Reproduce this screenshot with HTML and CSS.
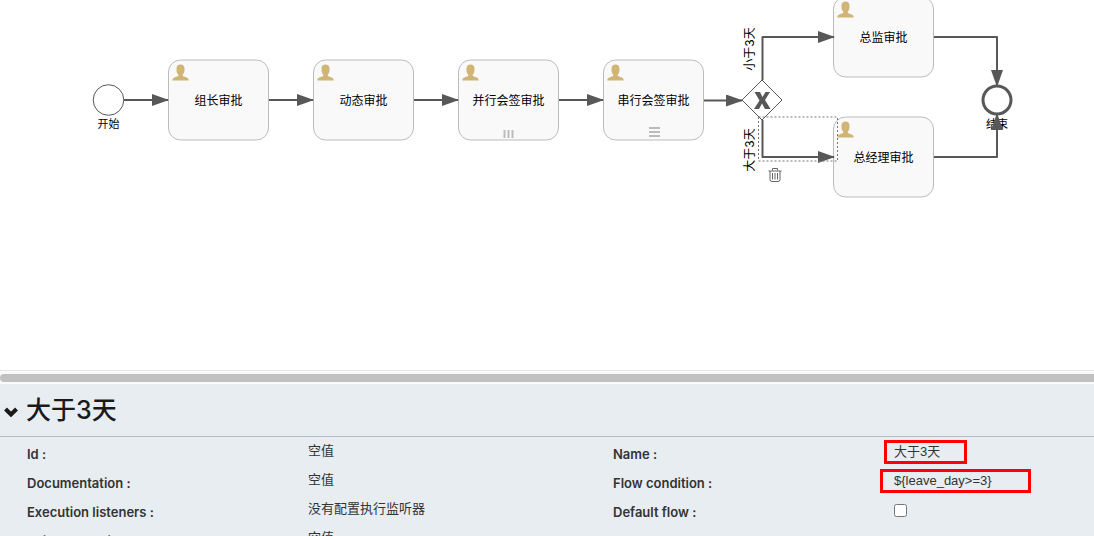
FILE: index.html
```html
<!DOCTYPE html>
<html lang="zh">
<head>
<meta charset="utf-8">
<title>大于3天</title>
<link rel="stylesheet" href="styles.css">
</head>
<body>
<main class="editor">
  <section class="canvas" aria-label="流程图">
    <svg class="diagram" width="100%" height="370">
      <defs>
        <marker id="arrow" markerUnits="userSpaceOnUse" markerWidth="17" markerHeight="12" refX="16" refY="6" orient="auto">
          <path class="arrow-head" d="M0 0L17 6L0 12Z"/>
        </marker>
        <symbol id="user" viewBox="0 0 17 17" width="17" height="17">
          <path class="user-shape" d="M8.500 .5C6.100 .5 4.500 2 4.500 4.300V6.200C4.500 8 5.200 9.400 6.200 10.500V12C5.300 12.900 1.800 13.100 .8 14.600Q.4 15.300 .3 16.500H16.700Q16.600 15.300 16.200 14.600C15.200 13.100 11.700 12.900 10.800 12V10.500C11.800 9.400 12.500 8 12.500 6.200V4.300C12.500 2 10.900 .5 8.500 .5Z"/>
        </symbol>
      </defs>

      <g class="task"><rect x="168.500" y="60" width="100" height="80" rx="12"/><use href="#user" x="172" y="64"/><text x="218.500" y="105">组长审批</text></g>
      <g class="task"><rect x="313.500" y="60" width="100" height="80" rx="12"/><use href="#user" x="317" y="64"/><text x="363.500" y="105">动态审批</text></g>
      <g class="task"><rect x="458.500" y="60" width="100" height="80" rx="12"/><use href="#user" x="462" y="64"/><text x="508.500" y="105">并行会签审批</text>
        <path class="multi" d="M504.500 130V138M508.500 130V138M512.500 130V138"/></g>
      <g class="task"><rect x="603.500" y="60" width="100" height="80" rx="12"/><use href="#user" x="607" y="64"/><text x="653.500" y="105">串行会签审批</text>
        <path class="multi" d="M649 128H660M649 132H660M649 136H660"/></g>
      <g class="task"><rect x="833.500" y="-3" width="100" height="80" rx="12"/><use href="#user" x="837" y="1"/><text x="883.500" y="42">总监审批</text></g>
      <g class="task"><rect x="833.500" y="117" width="100" height="80" rx="12"/><use href="#user" x="837" y="121"/><text x="883.500" y="162">总经理审批</text></g>

      <circle class="start" cx="108.500" cy="100" r="15.300"/>
      <text class="caption" x="108.500" y="128">开始</text>
      <path class="gateway" d="M742 100L762 80L782 100L762 120Z"/>
      <path class="cross" d="M754.500 92H760L762.500 97L765.500 92H770L765 100L770.500 109H765L762 103.500L759 109H754L759.500 100.500Z"/>
      <circle class="end" cx="997" cy="100" r="14"/>
      <text class="caption" x="997" y="128">结束</text>

      <g class="flow">
        <path d="M124 100H168"/>
        <path d="M269 100H313"/>
        <path d="M414 100H458"/>
        <path d="M559 100H603"/>
        <path d="M704 100.500H742"/>
        <path d="M762.500 80V37H834"/>
        <path d="M762.500 120V157H834"/>
        <path d="M934 37H997V86"/>
        <path d="M934 157H997V114"/>
      </g>
      <text class="caption flow-name" transform="translate(754 49) rotate(-90)">小于3天</text>
      <text class="caption flow-name" transform="translate(754 150) rotate(-90)">大于3天</text>
      <rect class="selection" x="758.500" y="117" width="79" height="44"/>
      <g class="trash">
        <path d="M768.500 171H781.500M772.500 170.500V168.500H777.500V170.500M770 171V179.500Q770 181.500 772 181.500H778Q780 181.500 780 179.500V171M772.500 173V179.500M775 173V179.500M777.500 173V179.500"/>
      </g>
    </svg>
  </section>

  <div class="splitter" role="separator"><div class="splitter-bar"></div></div>

  <section class="properties">
    <h1 class="title">
      <svg class="chevron" width="14" height="10" viewBox="0 0 14 10"><path d="M1.500 2L7 7.500L12.500 2"/></svg>
      <span>大于3天</span>
    </h1>
    <dl class="fields">
      <dt>Id :</dt><dd>空值</dd>
      <dt>Name :</dt><dd><span class="mark mark-name">大于3天</span></dd>
      <dt>Documentation :</dt><dd>空值</dd>
      <dt>Flow condition :</dt><dd><span class="mark mark-condition">${leave_day&gt;=3}</span></dd>
      <dt>Execution listeners :</dt><dd>没有配置执行监听器</dd>
      <dt><label for="default-flow">Default flow :</label></dt><dd><input class="check" type="checkbox" id="default-flow"></dd>
      <dt>Skip expression :</dt><dd>空值</dd>
    </dl>
  </section>
</main>
</body>
</html>
```
FILE: styles.css
```css
* { box-sizing: border-box; }

body {
  margin: 0;
  background: #fff;
  color: #333;
  font-family: Inter, "Noto Sans CJK SC", sans-serif;
}

.editor {
  display: flex;
  flex-direction: column;
  height: 100vh;
  overflow: hidden;
}

.canvas { flex: none; }
.diagram { display: block; }

.task rect { fill: #f9f9f9; stroke: #bbb; }
.task text,
.caption {
  font-family: Inter, "Noto Sans CJK SC", sans-serif;
  fill: #000;
  text-anchor: middle;
}
.task text { font-size: 12px; }
.caption { font-size: 11px; }
.flow-name { font-size: 12px; }
.user-shape { fill: #d1b575; }
.multi { stroke: #bbb; stroke-width: 2; }
.start { fill: #fff; stroke: #585858; }
.end { fill: #fff; stroke: #585858; stroke-width: 3; }
.gateway { fill: #fff; stroke: #585858; }
.cross { fill: #585858; }
.arrow-head { fill: #585858; }
.flow path {
  fill: none;
  stroke: #585858;
  stroke-width: 2;
  stroke-linejoin: round;
  marker-end: url(#arrow);
}
.selection { fill: none; stroke: #777; stroke-dasharray: 2 2; }
.trash path { fill: none; stroke: #666; }

.splitter {
  flex: none;
  padding: 3px 0 2px;
  border-top: 1px solid #e6e6e6;
  background: #fafafa;
}
.splitter-bar {
  height: 8px;
  border-radius: 4px 0 0 4px;
  background: #c1c1c1;
}

.properties {
  flex: 1;
  overflow: hidden;
  background: #e8edf1;
}

.title {
  display: flex;
  align-items: center;
  gap: 8px;
  margin: 0;
  padding: 8px 4px;
  border-bottom: 1px solid #b4bcc8;
  color: #1a1a1a;
  font-size: 25px;
  font-weight: 500;
  line-height: 36px;
}
.chevron { flex: none; margin-top: 4px; }
.chevron path { fill: none; stroke: #1a1a1a; stroke-width: 4; }

.fields {
  display: grid;
  grid-template-columns: 281fr 305fr 281fr 200fr;
  grid-auto-rows: 29px;
  margin: 0;
  padding-left: 27px;
  font-size: 13px;
  line-height: 20px;
}
.fields dt { padding-top: 7px; font-weight: 600; }
.fields dd {
  margin: 0;
  padding-top: 4px;
  font-family: "Liberation Sans", "Noto Sans CJK SC", sans-serif;
  white-space: nowrap;
}

.mark {
  display: inline-block;
  margin: -1px 0 0 -10px;
  padding-left: 7px;
  border: 3px solid #f00;
  line-height: 18px;
}
.mark-name { width: 83px; }
.mark-condition { width: 151px; margin-left: -14px; padding-left: 11px; }
.check { display: block; width: 13px; height: 13px; margin: 5px 0 0; }
```
